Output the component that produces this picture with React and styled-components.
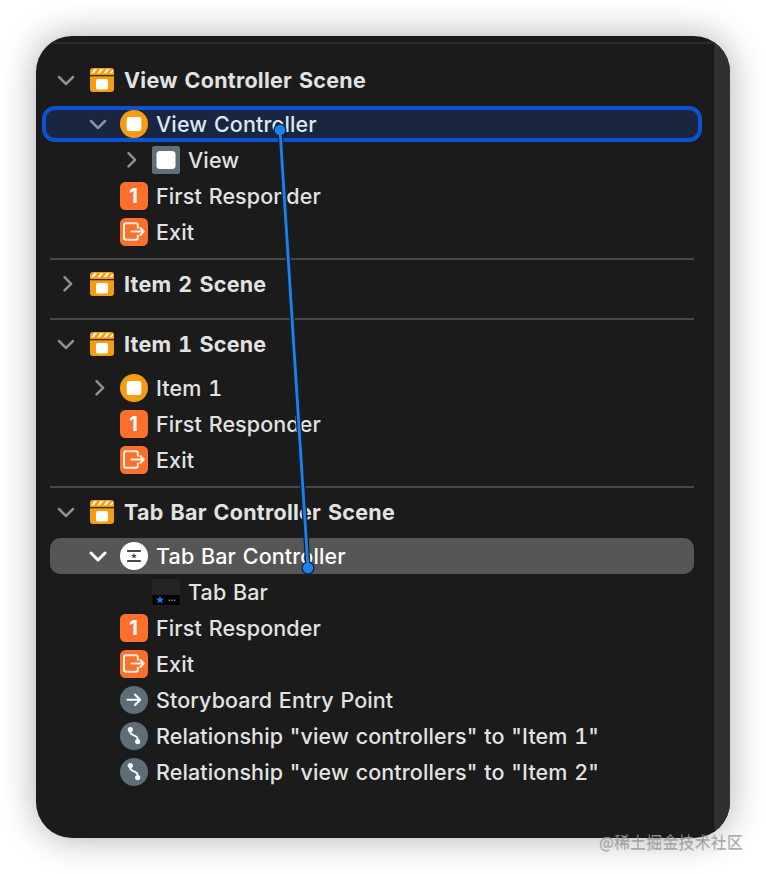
import React from 'react'
import styled, { createGlobalStyle } from 'styled-components'

const GlobalStyle = createGlobalStyle`
  body {
    margin: 0;
    background: #fff;
    overflow: hidden;
  }
`

const Page = styled.div`
  position: relative;
  box-sizing: border-box;
  width: 766px;
  height: 874px;
  padding: 36px;
  overflow: hidden;
  font-family: Inter, 'Liberation Sans', sans-serif;
`

const Panel = styled.div`
  display: flex;
  width: 694px;
  height: 802px;
  border-radius: 36px;
  overflow: hidden;
  background: #1b1b1b;
  box-shadow: 0 0 36px rgba(0, 0, 0, 0.32);
`

const Outline = styled.div`
  box-sizing: border-box;
  width: 678px;
  padding-top: 6px;
`

const TopRule = styled.div`
  height: 2px;
  margin-bottom: 12px;
  background: #2b2b2b;
`

const Gutter = styled.div`
  flex: 1;
  background: #303030;
  border-left: 1px solid #292929;
`

const Scene = styled.section`
  margin: 0 20px 0 14px;
  padding-bottom: 8px;

  & + & {
    border-top: 2px solid #474747;
  }
`

const Row = styled.div`
  display: flex;
  align-items: center;
  box-sizing: border-box;
  height: 36px;
  padding-left: ${props => 36 + props.$depth * 32}px;
  border-radius: 10px;
  color: ${props => (props.$state === 'selected' ? '#fff' : '#e2e2e2')};
  background: ${props => (props.$state === 'selected' ? '#565656' : 'none')};
`

const SceneHeader = styled(Row)`
  height: 48px;
  margin-bottom: 2px;
`

const DropRow = styled(Row)`
  margin: 0 -8px;
  padding-left: ${props => 40 + props.$depth * 32}px;
  border: 4px solid #0c53d3;
  border-radius: 13px;
  background: #1a263f;
  color: #dfe6f2;
`

const Arrow = styled.svg`
  width: 20px;
  height: 20px;
  margin-left: -30px;
  margin-right: 10px;
  fill: none;
  stroke: ${props => props.$color};
  stroke-width: ${props => (props.$color === '#fff' ? 3 : 2.5)};
  stroke-linecap: round;
  stroke-linejoin: round;
`

const Icon = styled.svg`
  flex: none;
  width: 28px;
  height: 28px;
  margin-left: 2px;
  margin-right: 8px;
`

const Label = styled.span`
  font-size: 21.5px;
  font-weight: ${props => (props.$bold ? 660 : 450)};
  font-feature-settings: 'tnum';
  letter-spacing: ${props => (props.$bold ? 0.25 : 0.11)}px;
  word-spacing: 0.9px;
  line-height: 28px;
  white-space: pre;
`

const Digit = styled.text`
  font-size: 20px;
  font-weight: 650;
  fill: #fff;
`

const Connection = styled.svg`
  position: absolute;
  left: 0;
  top: 0;
  width: 766px;
  height: 874px;
  pointer-events: none;
`

const Watermark = styled.div`
  position: absolute;
  left: 599px;
  top: 829px;
  font-family: 'Noto Sans CJK SC', sans-serif;
  font-size: 16px;
  font-weight: 300;
  letter-spacing: 0.15px;
  line-height: 24px;
  white-space: nowrap;
  color: #a0a0a0;
  text-shadow: 0.5px 0.5px 0 rgba(130, 130, 130, 0.6);
`

const icons = {
  scene: (
    <>
      <path d="M2 9.5V5a3 3 0 0 1 3-3h18a3 3 0 0 1 3 3v4z" fill="#f59c12" />
      <path
        d="M3 7.3 6.2 3h3L6 7.3zM9.2 7.3 12.4 3h3l-3.2 4.3zM15.4 7.3 18.6 3h3l-3.2 4.3zM21.4 7.3 24.3 3.4l1 1.6-1.3 2.3z"
        fill="#fff2dc"
      />
      <path d="M2 9h24v1.2H2z" fill="#3a2810" />
      <path d="M2 10.2h24V23a3 3 0 0 1-3 3H5a3 3 0 0 1-3-3z" fill="#f59c12" />
      <rect x="8" y="13" width="12" height="10.5" rx="1.5" fill="#fff" />
    </>
  ),
  controller: (
    <>
      <circle cx="14" cy="14" r="14" fill="#f59c12" />
      <rect x="6.7" y="7" width="14.6" height="14" rx="2" fill="#fff" />
    </>
  ),
  view: (
    <>
      <rect width="28" height="28" rx="2.5" fill="#5f707a" />
      <rect x="4.5" y="5" width="19" height="18" rx="3.5" fill="#fff" />
    </>
  ),
  responder: (
    <>
      <rect width="28" height="28" rx="5.5" fill="#fb702c" />
      <Digit x="13.6" y="21.3" textAnchor="middle">
        1
      </Digit>
    </>
  ),
  exit: (
    <>
      <rect width="28" height="28" rx="5.5" fill="#fb702c" />
      <path
        d="M17.8 9.8V7.2a2 2 0 0 0-2-2H6a2 2 0 0 0-2 2v12.6a2 2 0 0 0 2 2h9.8a2 2 0 0 0 2-2v-2.4M11.5 13.5h12M20.3 10l3.5 3.5-3.5 3.5"
        fill="none"
        stroke="#fff0e6"
        strokeWidth="2"
        strokeLinecap="round"
        strokeLinejoin="round"
      />
    </>
  ),
  tabController: (
    <>
      <circle cx="14" cy="14" r="14" fill="#fff" />
      <path
        d="M7.8 9h12.4M7.8 19h12.4"
        stroke="#4a4a4a"
        strokeWidth="1.8"
        strokeLinecap="round"
      />
      <path
        d="m14 11 .8 1.9 2.1.1-1.6 1.4.5 2-1.8-1.1-1.8 1.1.5-2-1.6-1.4 2.1-.1z"
        fill="#4a4a4a"
      />
    </>
  ),
  tabBar: (
    <>
      <rect width="28" height="16" y="1" fill="#232425" />
      <rect y="17" x="0.5" width="27" height="10" fill="#030303" />
      <path
        d="m8 17.8 1.1 2.7 2.9.2-2.2 1.8.7 2.8L8 23.8l-2.5 1.5.7-2.8L4 20.7l2.9-.2z"
        fill="#2c6df0"
      />
      <path
        d="M16.7 22.2h1.6M19.3 22.2h1.6M21.9 22.2h1.6"
        stroke="#7b7b7b"
        strokeWidth="1.5"
      />
    </>
  ),
  entry: (
    <>
      <circle cx="14" cy="14" r="14" fill="#5d6e79" />
      <path
        d="M7.5 13.7h12.4M15 8.5l5.2 5.2-5.2 5.2"
        fill="none"
        stroke="#fff"
        strokeWidth="2.1"
        strokeLinecap="round"
        strokeLinejoin="round"
      />
    </>
  ),
  relationship: (
    <>
      <circle cx="14" cy="14" r="14" fill="#5d6e79" />
      <circle cx="10.3" cy="7.6" r="2.6" fill="#fff" />
      <circle cx="17.7" cy="19.6" r="2.6" fill="#fff" />
      <path
        d="M10.2 8v2.1c0 3.7 7.5 2.8 7.5 6.8V19"
        fill="none"
        stroke="#fff"
        strokeWidth="1.9"
      />
    </>
  ),
}

const responder = { icon: 'responder', label: 'First Responder', depth: 1 }
const exit = { icon: 'exit', label: 'Exit', depth: 1 }

const scenes = [
  {
    label: 'View Controller Scene',
    open: true,
    items: [
      {
        icon: 'controller',
        label: 'View Controller',
        depth: 1,
        arrow: 'down',
        state: 'drop',
      },
      { icon: 'view', label: 'View', depth: 2, arrow: 'right' },
      responder,
      exit,
    ],
  },
  { label: 'Item 2 Scene', open: false, items: [] },
  {
    label: 'Item 1 Scene',
    open: true,
    items: [
      { icon: 'controller', label: 'Item 1', depth: 1, arrow: 'right' },
      responder,
      exit,
    ],
  },
  {
    label: 'Tab Bar Controller Scene',
    open: true,
    items: [
      {
        icon: 'tabController',
        label: 'Tab Bar Controller',
        depth: 1,
        arrow: 'down',
        state: 'selected',
      },
      { icon: 'tabBar', label: 'Tab Bar', depth: 2 },
      responder,
      exit,
      { icon: 'entry', label: 'Storyboard Entry Point', depth: 1 },
      {
        icon: 'relationship',
        label: 'Relationship "view controllers" to "Item 1"',
        depth: 1,
      },
      {
        icon: 'relationship',
        label: 'Relationship "view controllers" to "Item 2"',
        depth: 1,
      },
    ],
  },
]

const arrowColors = { selected: '#fff', drop: '#8793a8' }

function Disclosure({ direction, color = '#8e8e8e' }) {
  return (
    <Arrow viewBox="0 0 20 20" $color={color}>
      <path
        d={direction === 'down' ? 'M3 7l7 7 7-7' : 'M8.5 3.2l6.6 6.6-6.6 6.6'}
      />
    </Arrow>
  )
}

function OutlineItem({ icon, label, depth, arrow, state }) {
  const Wrap = state === 'drop' ? DropRow : Row
  return (
    <Wrap $depth={depth} $state={state}>
      {arrow && <Disclosure direction={arrow} color={arrowColors[state]} />}
      <Icon viewBox="0 0 28 28">{icons[icon]}</Icon>
      <Label>{label}</Label>
    </Wrap>
  )
}

export default function App() {
  return (
    <Page>
      <GlobalStyle />
      <Panel>
        <Outline>
          <TopRule />
          {scenes.map(scene => (
            <Scene key={scene.label}>
              <SceneHeader $depth={0}>
                <Disclosure direction={scene.open ? 'down' : 'right'} />
                <Icon viewBox="0 0 28 28">{icons.scene}</Icon>
                <Label $bold>{scene.label}</Label>
              </SceneHeader>
              {scene.items.map(item => (
                <OutlineItem key={item.label} {...item} />
              ))}
            </Scene>
          ))}
        </Outline>
        <Gutter />
      </Panel>
      <Connection viewBox="0 0 766 874">
        <path d="M280 130 308 568" stroke="#13202f" strokeWidth="5.4" />
        <circle cx="280" cy="130" r="6.6" fill="#10243c" />
        <circle cx="308" cy="568" r="6.6" fill="#10243c" />
        <path d="M280 130 308 568" stroke="#1c82e8" strokeWidth="2.8" />
        <circle cx="280" cy="130" r="5.3" fill="#1c82e8" />
        <circle cx="308" cy="568" r="5.3" fill="#1c82e8" />
      </Connection>
      <Watermark>@稀土掘金技术社区</Watermark>
    </Page>
  )
}
